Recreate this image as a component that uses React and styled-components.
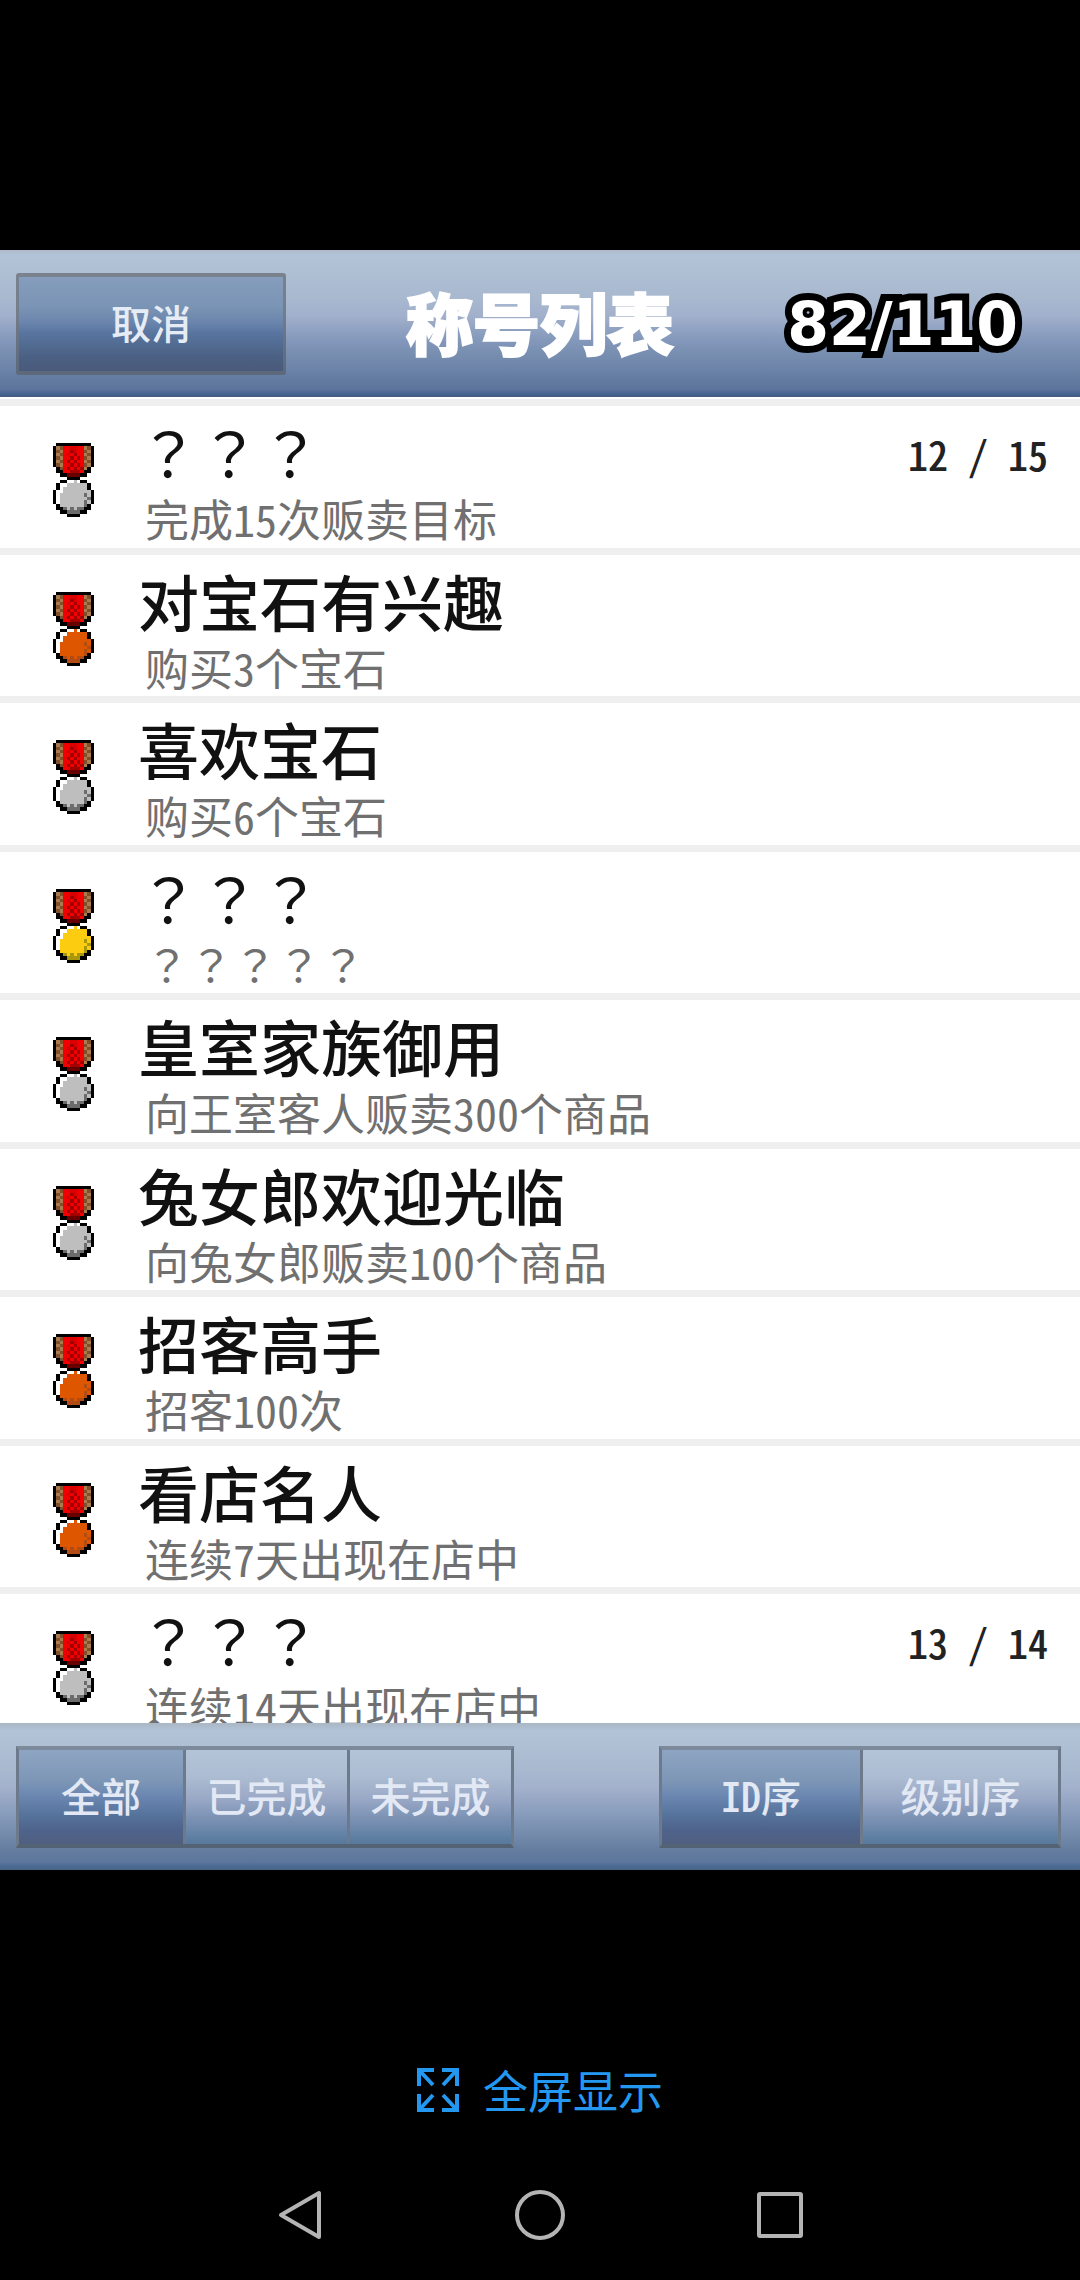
import { useState } from "react";
import styled, { createGlobalStyle } from "styled-components";

const GlobalStyle = createGlobalStyle`
  * {
    box-sizing: border-box;
  }

  body {
    margin: 0;
    background-color: #000000;
    font-family: "Noto Sans CJK SC", "Liberation Sans", sans-serif;
    font-feature-settings: "hwid" 1;
  }

  button {
    margin: 0;
    padding: 0;
    border: 0;
    background: none;
    font: inherit;
    font-feature-settings: inherit;
    cursor: pointer;
  }
`;

const Page = styled.div`
  display: flex;
  flex-direction: column;
  height: 100vh;
  padding-top: 250px;
`;

const Header = styled.header`
  display: grid;
  grid-template-columns: 1fr auto 1fr;
  align-items: center;
  flex-shrink: 0;
  height: 147px;
  padding: 0 16px;
  background: linear-gradient(
    #aeb9cb 0%,
    #b3c3d7 3%,
    #a9bad0 30%,
    #a3b1cc 44%,
    #8297ba 62%,
    #6d85a8 80%,
    #5c739b 95%,
    #46638f 98%,
    #455c80 100%
  );
`;

const CancelButton = styled.button`
  width: 270px;
  height: 102px;
  padding-bottom: 4px;
  border: solid rgba(85, 90, 95, 0.6);
  border-width: 4px 3px;
  border-radius: 3px;
  background: linear-gradient(
    #869dbd 0%,
    #7a94b5 32%,
    #6b85ad 48%,
    #58759f 60%,
    #4b6083 85%,
    #4a5a7c 100%
  );
  background-clip: padding-box;
  color: #e6ecf5;
  font-size: 40px;
  font-weight: 500;
  line-height: 44px;
`;

const Title = styled.h1`
  margin: 0;
  padding-bottom: 6px;
  color: #ffffff;
  font-size: 67px;
  font-weight: 900;
  line-height: 80px;
  -webkit-text-stroke: 2px #ffffff;
`;

const Counter = styled.div`
  justify-self: end;
  margin-right: 46px;
  color: #ffffff;
  font-family: "DejaVu Sans", sans-serif;
  font-size: 60px;
  font-weight: 700;
  line-height: 60px;
  -webkit-text-stroke: 14px #000000;
  paint-order: stroke fill;
`;

const List = styled.ul`
  flex: 1 1 0;
  min-height: 0;
  margin: 0;
  padding: 2px 0 0;
  overflow-y: auto;
  scrollbar-width: none;
  background-color: #ffffff;
  list-style: none;
`;

const Row = styled.li`
  display: flex;
  align-items: flex-start;
  height: 149px;
  padding: 0 32px 0 53px;
  border-top: 7px solid #efefef;

  &:nth-child(even) {
    height: 148px;
  }
`;

const MedalIcon = styled.svg`
  flex-shrink: 0;
  width: 41px;
  height: 74px;
  margin-top: 37px;
`;

const RowText = styled.div`
  flex: 1;
  padding: 16px 0 0 44px;
`;

/* unknown titles use the TC face, which centres the full-width question mark */
const Name = styled.div`
  color: #111111;
  font-family: ${({ $unknown }) =>
    $unknown ? '"Noto Sans CJK TC"' : '"Noto Sans CJK SC"'}, sans-serif;
  font-feature-settings: ${({ $unknown }) => ($unknown ? "normal" : '"hwid" 1')};
  font-size: 61px;
  font-weight: ${({ $unknown }) => ($unknown ? 400 : 500)};
  line-height: 60px;
`;

const Goal = styled.div`
  margin: 14px 0 0 7px;
  color: #707070;
  font-family: ${({ $unknown }) =>
    $unknown ? '"Noto Sans CJK TC"' : '"Noto Sans CJK SC"'}, sans-serif;
  font-feature-settings: ${({ $unknown }) => ($unknown ? "normal" : '"hwid" 1')};
  font-size: 44px;
  line-height: 44px;
`;

const Progress = styled.div`
  padding-top: 26px;
  color: #222222;
  font-size: 40px;
  font-weight: 500;
  line-height: 44px;
  white-space: pre;
`;

const Toolbar = styled.div`
  display: flex;
  align-items: center;
  justify-content: space-between;
  flex-shrink: 0;
  height: 147px;
  padding: 0 19px 0 16px;
  background: linear-gradient(
    #a9b6c5 0%,
    #b3c3d7 5%,
    #a9bad0 30%,
    #a3b1cc 44%,
    #8297b8 66%,
    #657e9f 86%,
    #5b759c 95%,
    #4b6c95 97%,
    #4b6484 100%
  );
`;

const Segments = styled.div`
  display: flex;
  height: 102px;
  border: solid #6d7a8b;
  border-width: 4px 3px;
  border-top-color: #7d8a9b;
  border-bottom-color: #546373;
`;

const Segment = styled.button`
  width: ${({ $wide }) => ($wide ? 198 : 164)}px;
  padding-bottom: 4px;
  background: ${({ $active }) =>
    $active
      ? "linear-gradient(#8ea4c2 0%, #7e97b7 32%, #6a86b0 50%, #57749d 68%, #4f638b 85%, #4f5f80 100%)"
      : "linear-gradient(#b4c4d7 0%, #abbbd1 30%, #9caac7 50%, #7c92b5 72%, #56799c 100%)"};
  color: #e2e9f4;
  font-size: 40px;
  font-weight: 500;
  line-height: 44px;

  & + & {
    border-left: 3px solid #6d7a8b;
  }
`;

const SystemArea = styled.footer`
  display: flex;
  flex-direction: column;
  align-items: center;
  flex-shrink: 0;
  padding: 198px 0 40px;
`;

const FullscreenButton = styled.button`
  display: flex;
  align-items: center;
  gap: 24px;
  color: #2498f0;
  font-size: 45px;
  line-height: 44px;
`;

const NavBar = styled.nav`
  display: grid;
  grid-template-columns: repeat(3, 240px);
  margin-top: 78px;
`;

const NavButton = styled.button`
  display: flex;
  justify-content: center;
  height: 50px;
`;

const MEDAL_PIXELS = [
  ".KKKKKKKKKK.",
  "KTtRRrrRRTtK",
  "KtTRRdrRRtTK",
  "KTtRrRdRRTtK",
  "KtTRRdRdRtTK",
  "KTtRdRdRRTtK",
  "KtTRRdRdRtTK",
  ".KtRdRdRdTK.",
  ".KKRRdddRKK.",
  "..KKDDDDKK..",
  "....KKKK....",
  "..KKWWgWKK..",
  ".KWWggggggK.",
  ".KWgggggggK.",
  "KWWggggggggK",
  "KWgggggggGgK",
  "KWggggggggGK",
  "KWgggggggGgK",
  ".KgggggggGK.",
  ".KKGgGgGGKK.",
  "..KKGGGGKK..",
  "....KKKK....",
];

const RIBBON_COLORS = {
  K: "#000000",
  W: "#ffffff",
  T: "#a87c4c",
  t: "#80502c",
  R: "#f00000",
  r: "#d80000",
  d: "#a40000",
  D: "#680000",
};

const DISC_COLORS = {
  silver: { g: "#bebebe", G: "#6c6c6c" },
  bronze: { g: "#de5600", G: "#b04c14" },
  gold: { g: "#fccc10", G: "#aa980c" },
};

const TITLES = [
  { id: 1, medal: "silver", name: "？？？", goal: "完成15次贩卖目标", progress: "12 / 15" },
  { id: 2, medal: "bronze", name: "对宝石有兴趣", goal: "购买3个宝石" },
  { id: 3, medal: "silver", name: "喜欢宝石", goal: "购买6个宝石" },
  { id: 4, medal: "gold", name: "？？？", goal: "？？？？？" },
  { id: 5, medal: "silver", name: "皇室家族御用", goal: "向王室客人贩卖300个商品" },
  { id: 6, medal: "silver", name: "兔女郎欢迎光临", goal: "向兔女郎贩卖100个商品" },
  { id: 7, medal: "bronze", name: "招客高手", goal: "招客100次" },
  { id: 8, medal: "bronze", name: "看店名人", goal: "连续7天出现在店中" },
  { id: 9, medal: "silver", name: "？？？", goal: "连续14天出现在店中", progress: "13 / 14" },
];

const FILTERS = ["全部", "已完成", "未完成"];
const SORTS = ["ID序", "级别序"];

const isUnknown = (text) => text.startsWith("？");

function Medal({ kind }) {
  const colors = { ...RIBBON_COLORS, ...DISC_COLORS[kind] };

  return (
    <MedalIcon
      viewBox="0 0 12 22"
      preserveAspectRatio="none"
      shapeRendering="crispEdges"
      aria-hidden="true"
    >
      {MEDAL_PIXELS.map((line, y) =>
        line
          .split("")
          .map((key, x) =>
            key === "." ? null : (
              <rect key={`${x}-${y}`} x={x} y={y} width="1" height="1" fill={colors[key]} />
            )
          )
      )}
    </MedalIcon>
  );
}

function SegmentedControl({ label, options, value, onChange, wide }) {
  return (
    <Segments role="group" aria-label={label}>
      {options.map((option) => (
        <Segment
          key={option}
          type="button"
          $wide={wide}
          $active={option === value}
          aria-pressed={option === value}
          onClick={() => onChange(option)}
        >
          {option}
        </Segment>
      ))}
    </Segments>
  );
}

function App() {
  const [filter, setFilter] = useState(FILTERS[0]);
  const [sort, setSort] = useState(SORTS[0]);

  return (
    <Page>
      <GlobalStyle />
      <Header>
        <CancelButton type="button">取消</CancelButton>
        <Title>称号列表</Title>
        <Counter>82/110</Counter>
      </Header>
      <List>
        {TITLES.map((item) => (
          <Row key={item.id}>
            <Medal kind={item.medal} />
            <RowText>
              <Name $unknown={isUnknown(item.name)}>{item.name}</Name>
              <Goal $unknown={isUnknown(item.goal)}>{item.goal}</Goal>
            </RowText>
            {item.progress && <Progress>{item.progress}</Progress>}
          </Row>
        ))}
      </List>
      <Toolbar>
        <SegmentedControl label="筛选" options={FILTERS} value={filter} onChange={setFilter} />
        <SegmentedControl label="排序" options={SORTS} value={sort} onChange={setSort} wide />
      </Toolbar>
      <SystemArea>
        <FullscreenButton type="button">
          <svg width="42" height="44" viewBox="0 0 42 44" fill="none" stroke="currentColor" strokeWidth="4">
            <path d="M2 18V2H17M2 2L16 17" />
            <path d="M25 2H40V18M40 2L26 17" />
            <path d="M2 26V42H17M2 42L16 27" />
            <path d="M25 42H40V26M40 42L26 27" />
          </svg>
          全屏显示
        </FullscreenButton>
        <NavBar>
          <NavButton type="button" aria-label="返回">
            <svg width="44" height="50" viewBox="0 0 44 50" fill="none" stroke="#b4b4b4" strokeWidth="4" strokeLinejoin="round">
              <path d="M41 3V47L3 25Z" />
            </svg>
          </NavButton>
          <NavButton type="button" aria-label="主页">
            <svg width="50" height="50" viewBox="0 0 50 50" fill="none" stroke="#b4b4b4" strokeWidth="4">
              <circle cx="25" cy="25" r="23" />
            </svg>
          </NavButton>
          <NavButton type="button" aria-label="最近">
            <svg width="46" height="50" viewBox="0 0 46 50" fill="none" stroke="#b4b4b4" strokeWidth="4" strokeLinejoin="round">
              <rect x="2" y="4" width="42" height="42" rx="1" />
            </svg>
          </NavButton>
        </NavBar>
      </SystemArea>
    </Page>
  );
}

export default App;
